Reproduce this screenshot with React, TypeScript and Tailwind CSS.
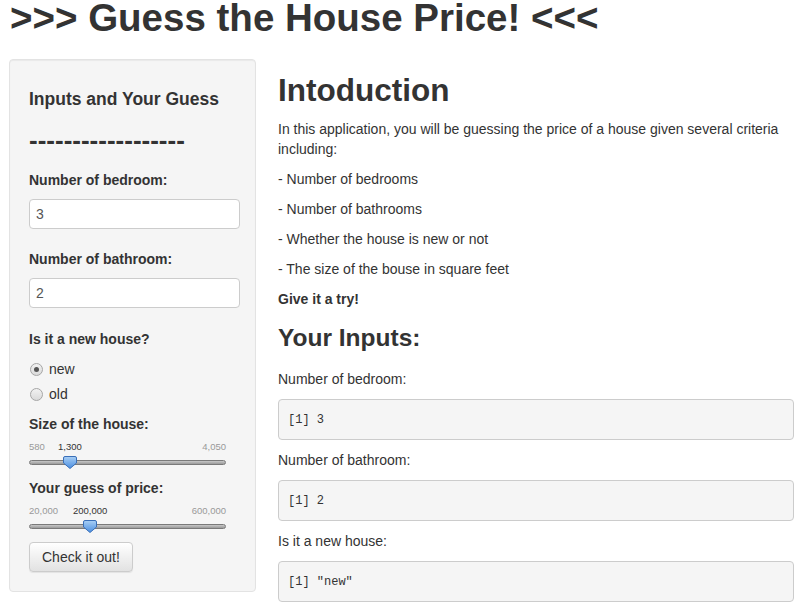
function Slider({ min, max, value, pct }: { min: string; max: string; value: string; pct: number }) {
  return (
    <div className="relative mr-[14px] h-[44px]">
      <span className="absolute left-0 top-[7px] text-[9.5px] leading-[12px] text-[#999]">{min}</span>
      <span className="absolute right-0 top-[7px] text-[9.5px] leading-[12px] text-[#999]">{max}</span>
      <span
        className="absolute top-[7px] -translate-x-1/2 text-[9.5px] leading-[12px] text-[#333]"
        style={{ left: `${pct}%` }}
      >
        {value}
      </span>
      <div className="absolute left-0 right-0 top-[26px] h-[5px] rounded-[3px] border border-[#7a7a7a] bg-gradient-to-b from-[#c8c8c8] to-[#9a9a9a]" />
      <svg
        className="absolute top-[22px] -translate-x-1/2"
        style={{ left: `${pct}%` }}
        width="14"
        height="14"
        viewBox="0 0 14 14"
      >
        <defs>
          <linearGradient id={`g${value}`} x1="0" y1="0" x2="0" y2="1">
            <stop offset="0" stopColor="#a9cff5" />
            <stop offset="1" stopColor="#4a8ee0" />
          </linearGradient>
        </defs>
        <path
          d="M2 0.5 H12 A1.5 1.5 0 0 1 13.5 2 V7 L7 12.5 L0.5 7 V2 A1.5 1.5 0 0 1 2 0.5 Z"
          fill={`url(#g${value})`}
          stroke="#3a6fb8"
          strokeWidth="1"
        />
      </svg>
    </div>
  );
}

function Radio({ label, checked }: { label: string; checked?: boolean }) {
  return (
    <div className="flex items-center h-[20px]">
      <span className="ml-[1px] flex h-[13px] w-[13px] items-center justify-center rounded-full border border-[#a6a6a6] bg-gradient-to-b from-[#f2f2f2] to-[#dadada]">
        {checked && <span className="h-[5px] w-[5px] rounded-full bg-[#555]" />}
      </span>
      <span className="ml-[6px] text-[14px] text-[#333]">{label}</span>
    </div>
  );
}

const mono = { fontFamily: '"Liberation Mono", "Courier New", monospace' };

export default function App() {
  return (
    <div
      className="min-h-screen bg-white px-[9px] text-[14px] leading-[20px] text-[#333]"
      style={{ fontFamily: '"Liberation Sans", Arial, sans-serif' }}
    >
      <h1 className="pl-[1px] text-[38.5px] leading-[36px] font-bold whitespace-nowrap">&gt;&gt;&gt; Guess the House Price! &lt;&lt;&lt;</h1>

      <div className="mt-[23px] flex gap-[22px]">
        {/* sidebar */}
        <div className="w-[247px] shrink-0 self-start rounded-[4px] border border-[#e3e3e3] bg-[#f5f5f5] pl-[19px] pr-[15px] pb-[19px] pt-[19px] shadow-[inset_0_1px_1px_rgba(0,0,0,0.05)]">
          <h4 className="mt-[10px] text-[17.5px] leading-[20px] font-bold">Inputs and Your Guess</h4>
          <h3 className="mt-[17px] text-[26px] leading-[28px] font-bold">------------------</h3>

          <label className="mt-[16px] block font-bold">Number of bedroom:</label>
          <div className="mt-[9px] h-[30px] rounded-[4px] border border-[#ccc] bg-white px-[6px] leading-[28px] text-[#555]">3</div>

          <label className="mt-[20px] block font-bold">Number of bathroom:</label>
          <div className="mt-[9px] h-[30px] rounded-[4px] border border-[#ccc] bg-white px-[6px] leading-[28px] text-[#555]">2</div>

          <label className="mt-[21px] block font-bold">Is it a new house?</label>
          <div className="mt-[10px]">
            <Radio label="new" checked />
            <div className="mt-[5px]">
              <Radio label="old" />
            </div>
          </div>

          <label className="mt-[10px] block font-bold">Size of the house:</label>
          <Slider min="580" max="4,050" value="1,300" pct={20.75} />

          <label className="block font-bold">Your guess of price:</label>
          <Slider min="20,000" max="600,000" value="200,000" pct={31} />

          <button className="h-[30px] rounded-[4px] border border-[#ccc] bg-gradient-to-b from-white to-[#e2e2e2] px-[12px] text-[14px] text-[#333] shadow-[inset_0_1px_0_rgba(255,255,255,0.15),0_1px_1px_rgba(0,0,0,0.075)]">
            Check it out!
          </button>
        </div>

        {/* main */}
        <div className="w-[516px]">
          <h1 className="mt-[14px] mb-[12px] text-[31.5px] leading-[34px] font-bold">Intoduction</h1>
          <p className="mb-[10px]">
            In this application, you will be guessing the price of a house given several criteria including:
          </p>
          <p className="mb-[10px]">- Number of bedrooms</p>
          <p className="mb-[10px]">- Number of bathrooms</p>
          <p className="mb-[10px]">- Whether the house is new or not</p>
          <p className="mb-[10px]">- The size of the bouse in square feet</p>
          <p className="mb-[16px] font-bold">Give it a try!</p>

          <h2 className="mb-[18px] text-[24.5px] leading-[26px] font-bold">Your Inputs:</h2>

          <p className="mb-[10px]">Number of bedroom:</p>
          <pre className="mb-[10px] h-[41px] rounded-[4px] border border-[#ccc] bg-[#f5f5f5] px-[9px] pt-[10px] text-[12px] leading-[20px] text-[#333]" style={mono}>[1] 3</pre>

          <p className="mb-[10px]">Number of bathroom:</p>
          <pre className="mb-[10px] h-[41px] rounded-[4px] border border-[#ccc] bg-[#f5f5f5] px-[9px] pt-[10px] text-[12px] leading-[20px] text-[#333]" style={mono}>[1] 2</pre>

          <p className="mb-[10px]">Is it a new house:</p>
          <pre className="mb-[10px] h-[41px] rounded-[4px] border border-[#ccc] bg-[#f5f5f5] px-[9px] pt-[10px] text-[12px] leading-[20px] text-[#333]" style={mono}>[1] "new"</pre>
        </div>
      </div>
    </div>
  );
}
